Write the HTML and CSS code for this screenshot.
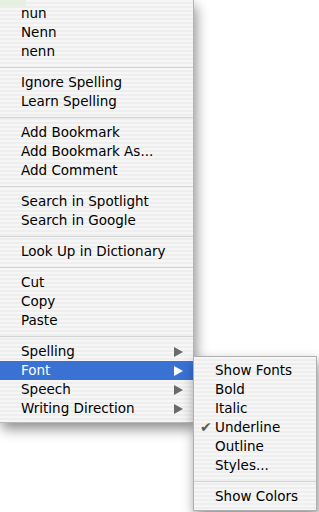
FILE: index.html
```html
<!DOCTYPE html>
<html>
<head>
<meta charset="utf-8">
<link rel="stylesheet" href="styles.css">
</head>
<body>
<div class="bg-mark"></div>
<div class="menu main">
  <div class="item">nun</div>
  <div class="item">Nenn</div>
  <div class="item">nenn</div>
  <div class="sep"></div>
  <div class="item">Ignore Spelling</div>
  <div class="item">Learn Spelling</div>
  <div class="sep"></div>
  <div class="item">Add Bookmark</div>
  <div class="item">Add Bookmark As...</div>
  <div class="item">Add Comment</div>
  <div class="sep"></div>
  <div class="item">Search in Spotlight</div>
  <div class="item">Search in Google</div>
  <div class="sep"></div>
  <div class="item">Look Up in Dictionary</div>
  <div class="sep"></div>
  <div class="item">Cut</div>
  <div class="item">Copy</div>
  <div class="item">Paste</div>
  <div class="sep"></div>
  <div class="item sub">Spelling<svg class="arrow" viewBox="0 0 9 10"><path d="M0 0 L9 5 L0 10 Z"/></svg></div>
  <div class="item sub active">Font<svg class="arrow" viewBox="0 0 9 10"><path d="M0 0 L9 5 L0 10 Z"/></svg>
    <div class="menu submenu">
      <div class="item">Show Fonts</div>
      <div class="item">Bold</div>
      <div class="item">Italic</div>
      <div class="item"><span class="check">✔</span>Underline</div>
      <div class="item">Outline</div>
      <div class="item">Styles...</div>
      <div class="sep"></div>
      <div class="item">Show Colors</div>
    </div>
  </div>
  <div class="item sub">Speech<svg class="arrow" viewBox="0 0 9 10"><path d="M0 0 L9 5 L0 10 Z"/></svg></div>
  <div class="item sub">Writing Direction<svg class="arrow" viewBox="0 0 9 10"><path d="M0 0 L9 5 L0 10 Z"/></svg></div>
</div>
</body>
</html>
```
FILE: styles.css
```css
html, body {
  margin: 0;
  padding: 0;
  background: #ffffff;
}
body {
  position: relative;
  width: 319px;
  height: 512px;
  overflow: hidden;
  font-family: "DejaVu Sans", "Lucida Grande", sans-serif;
  font-size: 13.5px;
  color: #000;
}
.bg-mark {
  position: absolute;
  left: 0;
  top: 0;
  width: 26px;
  height: 7px;
  background: #e3efdf;
  z-index: 2;
  opacity: 0.8;
}
.menu {
  background-color: #f4f4f4;
  background-image: repeating-linear-gradient(to bottom, #f6f6f6 0px, #f6f6f6 2px, #eeeeee 2px, #eeeeee 4px);
  padding: 4px 0;
}
.main {
  position: relative;
  width: 193px;
  border-right: 1px solid #b4b4b4;
  border-bottom: 1px solid #b8b8b8;
  box-shadow: 2px 6px 12px rgba(0, 0, 0, 0.45);
}
.item {
  position: relative;
  height: 19px;
  line-height: 19px;
  padding-left: 21px;
  display: flex;
  align-items: center;
  white-space: nowrap;
}
.sep {
  height: 12px;
  display: flex;
  align-items: center;
}
.sep::before {
  content: "";
  display: block;
  width: 100%;
  height: 1px;
  background: #d4d4d4;
}
.arrow {
  position: absolute;
  left: 174px;
  top: 5px;
  width: 9px;
  height: 10px;
  fill: #6a6a6a;
}
.active {
  background: #3a72d4;
  color: #fff;
}
.active > .arrow {
  fill: #fff;
}
.submenu {
  position: absolute;
  left: 193px;
  top: -5px;
  width: 122px;
  border: 1px solid #b0b0b0;
  color: #000;
  box-shadow: 2px 6px 12px rgba(0, 0, 0, 0.45);
  z-index: 2;
}
.check {
  position: absolute;
  left: 6px;
  color: #5a5a5a;
  font-size: 14px;
}
```
